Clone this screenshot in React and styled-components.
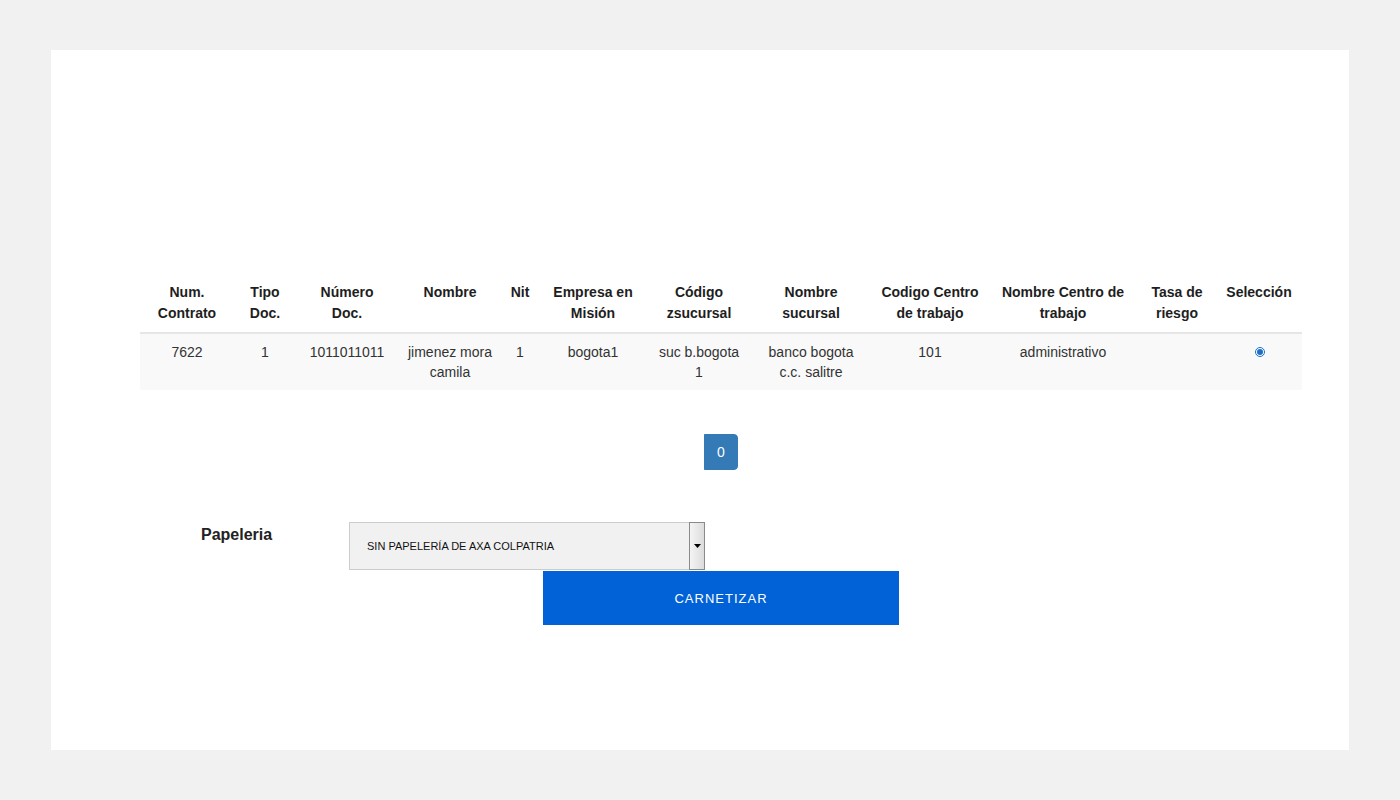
import React, { useState } from "react";
import styled, { createGlobalStyle } from "styled-components";

const GlobalStyle = createGlobalStyle`
  html, body {
    margin: 0;
    padding: 0;
    background: #f1f1f1;
  }
  body {
    font-family: "Liberation Sans", Arial, sans-serif;
    color: #333;
  }
`;

const columns = [
  { label: ["Num.", "Contrato"], width: 94 },
  { label: ["Tipo", "Doc."], width: 62 },
  { label: ["Número", "Doc."], width: 102 },
  { label: ["Nombre"], width: 104 },
  { label: ["Nit"], width: 36 },
  { label: ["Empresa en", "Misión"], width: 110 },
  { label: ["Código", "zsucursal"], width: 102 },
  { label: ["Nombre", "sucursal"], width: 122 },
  { label: ["Codigo Centro", "de trabajo"], width: 116 },
  { label: ["Nombre Centro de", "trabajo"], width: 150 },
  { label: ["Tasa de", "riesgo"], width: 78 },
  { label: ["Selección"], width: 86 },
];

const rows = [
  {
    id: 7622,
    cells: [
      "7622",
      "1",
      "1011011011",
      ["jimenez mora", "camila"],
      "1",
      "bogota1",
      ["suc b.bogota", "1"],
      ["banco bogota", "c.c. salitre"],
      "101",
      "administrativo",
      "",
    ],
  },
];

function App() {
  const [selected, setSelected] = useState(7622);

  return (
    <>
      <GlobalStyle />
      <Page>
        <Card>
          <Table>
            <colgroup>
              {columns.map((c, i) => (
                <col key={i} style={{ width: c.width }} />
              ))}
            </colgroup>
            <thead>
              <tr>
                {columns.map((c, i) => (
                  <Th key={i}>
                    {c.label.map((l, j) => (
                      <div key={j}>{l}</div>
                    ))}
                  </Th>
                ))}
              </tr>
            </thead>
            <tbody>
              {rows.map((r) => (
                <BodyRow key={r.id}>
                  {r.cells.map((cell, i) => (
                    <Td key={i}>
                      {Array.isArray(cell)
                        ? cell.map((l, j) => <div key={j}>{l}</div>)
                        : cell}
                    </Td>
                  ))}
                  <Td>
                    <Radio
                      type="radio"
                      name="seleccion"
                      checked={selected === r.id}
                      onChange={() => setSelected(r.id)}
                    />
                  </Td>
                </BodyRow>
              ))}
            </tbody>
          </Table>

          <Pagination>
            <PageButton $active>0</PageButton>
          </Pagination>

          <FormRow>
            <Label>Papeleria</Label>
            <Select>
              <SelectText>SIN PAPELERÍA DE AXA COLPATRIA</SelectText>
              <SelectArrow>
                <svg width="7" height="4" viewBox="0 0 7 4">
                  <path d="M0 0h7L3.5 4z" fill="#000" />
                </svg>
              </SelectArrow>
            </Select>
          </FormRow>

          <Actions>
            <SubmitButton>CARNETIZAR</SubmitButton>
          </Actions>
        </Card>
      </Page>
    </>
  );
}

const Page = styled.div`
  padding: 50px 51px;
  min-height: 800px;
  box-sizing: border-box;
`;

const Card = styled.div`
  background: #fff;
  height: 700px;
  box-sizing: border-box;
  padding: 224px 47px 0 89px;
  display: flex;
  flex-direction: column;
`;

const Table = styled.table`
  width: 1162px;
  border-collapse: collapse;
  table-layout: fixed;
`;

const Th = styled.th`
  font-family: "Liberation Sans", Arial, sans-serif;
  font-size: 14px;
  font-weight: bold;
  line-height: 21px;
  color: #1e1e1e;
  text-align: center;
  vertical-align: top;
  padding: 8px 0 8px;
  border-bottom: 2px solid #e6e6e6;
  white-space: nowrap;
`;

const BodyRow = styled.tr`
  background: #f9f9f9;
`;

const Td = styled.td`
  font-size: 14px;
  line-height: 20px;
  color: #333;
  text-align: center;
  vertical-align: top;
  padding: 8px 2px;
`;

const Radio = styled.input`
  margin: 5px 0 0 2px;
  width: 10px;
  height: 10px;
  accent-color: #1a6fc9;
`;

const Pagination = styled.div`
  display: flex;
  justify-content: center;
  margin-top: 44px;
`;

const PageButton = styled.button`
  width: 34px;
  height: 36px;
  border: 1px solid ${(p) => (p.$active ? "#337ab7" : "#ddd")};
  background: ${(p) => (p.$active ? "#337ab7" : "#fff")};
  color: ${(p) => (p.$active ? "#fff" : "#337ab7")};
  font-family: "Liberation Sans", Arial, sans-serif;
  font-size: 14px;
  border-radius: 0 4px 4px 0;
  padding: 0;
  cursor: pointer;
`;

const FormRow = styled.div`
  display: flex;
  align-items: flex-start;
  margin-top: 52px;
  padding-left: 61px;
`;

const Label = styled.label`
  width: 148px;
  font-size: 16px;
  font-weight: bold;
  color: #222;
  padding-top: 4px;
`;

const Select = styled.div`
  width: 356px;
  height: 48px;
  box-sizing: border-box;
  display: flex;
  align-items: stretch;
  background: #f1f1f1;
  border: 1px solid #ccc;
  border-right: none;
`;

const SelectText = styled.div`
  flex: 1;
  display: flex;
  align-items: center;
  padding-left: 17px;
  font-family: "Liberation Sans", Arial, sans-serif;
  font-size: 11px;
  color: #111;
`;

const SelectArrow = styled.div`
  width: 16px;
  box-sizing: border-box;
  border: 1px solid #8a8a8a;
  margin: -1px 0;
  background: linear-gradient(to right, #f4f4f4, #dcdcdc);
  display: flex;
  align-items: center;
  justify-content: center;
`;

const Actions = styled.div`
  display: flex;
  justify-content: center;
  width: 1162px;
  margin-top: 1px;
`;

const SubmitButton = styled.button`
  width: 356px;
  height: 54px;
  border: none;
  background: #0062d6;
  color: #fff;
  font-family: "Liberation Sans", Arial, sans-serif;
  font-size: 13px;
  letter-spacing: 1px;
  cursor: pointer;
`;

export default App;
